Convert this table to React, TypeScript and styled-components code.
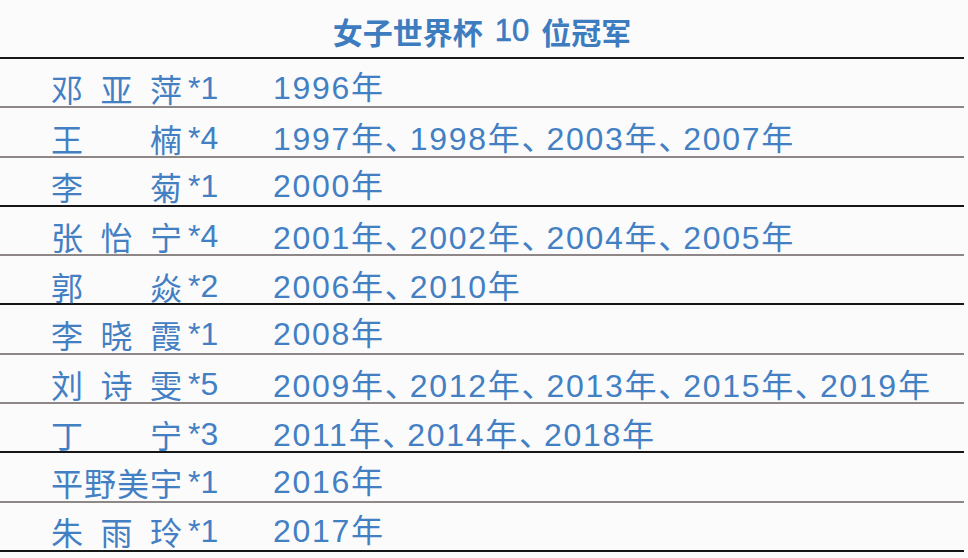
import React from "react";
import styled, { createGlobalStyle } from "styled-components";

const GlobalStyle = createGlobalStyle`
  html, body {
    margin: 0;
    padding: 0;
    background: #fcfbfc;
  }
  body {
    width: 968px;
    height: 558px;
    overflow: hidden;
    font-family: "Liberation Sans", "Noto Sans CJK SC", sans-serif;
  }
`;

type Champion = {
  name: string[];
  count: number;
  years: number[];
  dark: boolean;
};

const champions: Champion[] = [
  { name: ["邓", "亚", "萍"], count: 1, years: [1996], dark: false },
  { name: ["王", "楠"], count: 4, years: [1997, 1998, 2003, 2007], dark: false },
  { name: ["李", "菊"], count: 1, years: [2000], dark: true },
  { name: ["张", "怡", "宁"], count: 4, years: [2001, 2002, 2004, 2005], dark: false },
  { name: ["郭", "焱"], count: 2, years: [2006, 2010], dark: true },
  { name: ["李", "晓", "霞"], count: 1, years: [2008], dark: false },
  { name: ["刘", "诗", "雯"], count: 5, years: [2009, 2012, 2013, 2015, 2019], dark: false },
  { name: ["丁", "宁"], count: 3, years: [2011, 2014, 2018], dark: true },
  { name: ["平", "野", "美", "宇"], count: 1, years: [2016], dark: false },
  { name: ["朱", "雨", "玲"], count: 1, years: [2017], dark: true },
];

const Page = styled.div`
  width: 964px;
  display: flex;
  flex-direction: column;
`;

const Title = styled.h1`
  margin: 0;
  height: 59px;
  box-sizing: border-box;
  padding-top: 5px;
  display: flex;
  align-items: center;
  justify-content: center;
  font-family: "Noto Sans CJK SC", sans-serif;
  font-weight: 700;
  font-size: 30px;
  line-height: 30px;
  color: #3d7cbf;
  border-bottom: 2px solid #181818;
`;

const TitleNumber = styled.span`
  font-family: "Liberation Sans", sans-serif;
  font-weight: 400;
  font-size: 31px;
  margin: 0 12px 0 12px;
  -webkit-text-stroke: 0.6px #3d7cbf;
`;

const Table = styled.div`
  display: flex;
  flex-direction: column;
`;

const Row = styled.div<{ $dark: boolean }>`
  height: 49.3px;
  box-sizing: border-box;
  padding: 10px 0 0 51px;
  display: grid;
  grid-template-columns: 131px 91px 1fr;
  align-items: center;
  border-bottom: 2px solid ${(p) => (p.$dark ? "#161616" : "#8e8788")};
  color: #4380c3;
  font-size: 32px;
  line-height: 36px;
`;

const Name = styled.div`
  display: flex;
  justify-content: space-between;
  font-family: "Noto Sans CJK SC", sans-serif;
`;

const Count = styled.div`
  padding-left: 6px;
  white-space: nowrap;
`;

const YearList = styled.div`
  display: flex;
  align-items: baseline;
  white-space: nowrap;
`;

const Year = styled.span`
  letter-spacing: 1.7px;
`;

const Sep = styled.span`
  letter-spacing: -7px;
  font-family: "Noto Sans CJK SC", sans-serif;
`;

export default function App() {
  return (
    <>
      <GlobalStyle />
      <Page>
        <Title>
          女子世界杯<TitleNumber>10</TitleNumber>位冠军
        </Title>
        <Table>
          {champions.map((c, i) => (
            <Row key={i} $dark={c.dark}>
              <Name>
                {c.name.map((ch, j) => (
                  <span key={j}>{ch}</span>
                ))}
              </Name>
              <Count>*{c.count}</Count>
              <YearList>
                {c.years.map((y, j) => (
                  <React.Fragment key={y}>
                    {j > 0 && <Sep>、</Sep>}
                    <Year>{y}年</Year>
                  </React.Fragment>
                ))}
              </YearList>
            </Row>
          ))}
        </Table>
      </Page>
    </>
  );
}
